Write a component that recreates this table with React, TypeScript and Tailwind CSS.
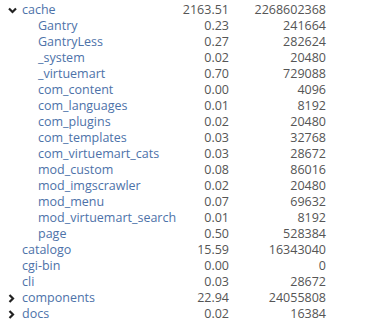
import React from "react";

interface Row {
  name: string;
  mb: string;
  bytes: string;
  depth: number;
  toggle?: "open" | "closed";
}

const ROWS: Row[] = [
  { name: "cache", mb: "2163.51", bytes: "2268602368", depth: 0, toggle: "open" },
  { name: "Gantry", mb: "0.23", bytes: "241664", depth: 1 },
  { name: "GantryLess", mb: "0.27", bytes: "282624", depth: 1 },
  { name: "_system", mb: "0.02", bytes: "20480", depth: 1 },
  { name: "_virtuemart", mb: "0.70", bytes: "729088", depth: 1 },
  { name: "com_content", mb: "0.00", bytes: "4096", depth: 1 },
  { name: "com_languages", mb: "0.01", bytes: "8192", depth: 1 },
  { name: "com_plugins", mb: "0.02", bytes: "20480", depth: 1 },
  { name: "com_templates", mb: "0.03", bytes: "32768", depth: 1 },
  { name: "com_virtuemart_cats", mb: "0.03", bytes: "28672", depth: 1 },
  { name: "mod_custom", mb: "0.08", bytes: "86016", depth: 1 },
  { name: "mod_imgscrawler", mb: "0.02", bytes: "20480", depth: 1 },
  { name: "mod_menu", mb: "0.07", bytes: "69632", depth: 1 },
  { name: "mod_virtuemart_search", mb: "0.01", bytes: "8192", depth: 1 },
  { name: "page", mb: "0.50", bytes: "528384", depth: 1 },
  { name: "catalogo", mb: "15.59", bytes: "16343040", depth: 0 },
  { name: "cgi-bin", mb: "0.00", bytes: "0", depth: 0 },
  { name: "cli", mb: "0.03", bytes: "28672", depth: 0 },
  { name: "components", mb: "22.94", bytes: "24055808", depth: 0, toggle: "closed" },
  { name: "docs", mb: "0.02", bytes: "16384", depth: 0, toggle: "closed" },
];

// small bold chevron, pointing down when the folder is open
const Chevron: React.FC<{ open: boolean }> = ({ open }) =>
  open ? (
    <svg width="9" height="7" viewBox="0 0 9 7" className="text-[#222]">
      <path d="M1 1.5 L4.5 5 L8 1.5" fill="none" stroke="currentColor" strokeWidth="2.2" />
    </svg>
  ) : (
    <svg width="7" height="9" viewBox="0 0 7 9" className="text-[#222]">
      <path d="M1.5 1 L5 4.5 L1.5 8" fill="none" stroke="currentColor" strokeWidth="2.2" />
    </svg>
  );

export default function App() {
  return (
    <div className="w-[383px] h-[323px] bg-white overflow-hidden pt-[2px] font-['Open_Sans',sans-serif] text-[12.5px]">
      {ROWS.map((r) => (
        <div key={r.name} className="flex items-center h-[16px] leading-[16px]">
          <div className="w-[22px] pl-[8px] flex items-center shrink-0">
            {r.toggle && <Chevron open={r.toggle === "open"} />}
          </div>
          <div
            className={`w-[150px] shrink-0 text-[#4d72a9] whitespace-nowrap ${r.depth ? "pl-[16px]" : ""}`}
          >
            {r.name}
          </div>
          <div className="w-[57px] text-right text-[#555] tabular-nums">{r.mb}</div>
          <div className="w-[97px] text-right text-[#555] tabular-nums">{r.bytes}</div>
        </div>
      ))}
    </div>
  );
}
